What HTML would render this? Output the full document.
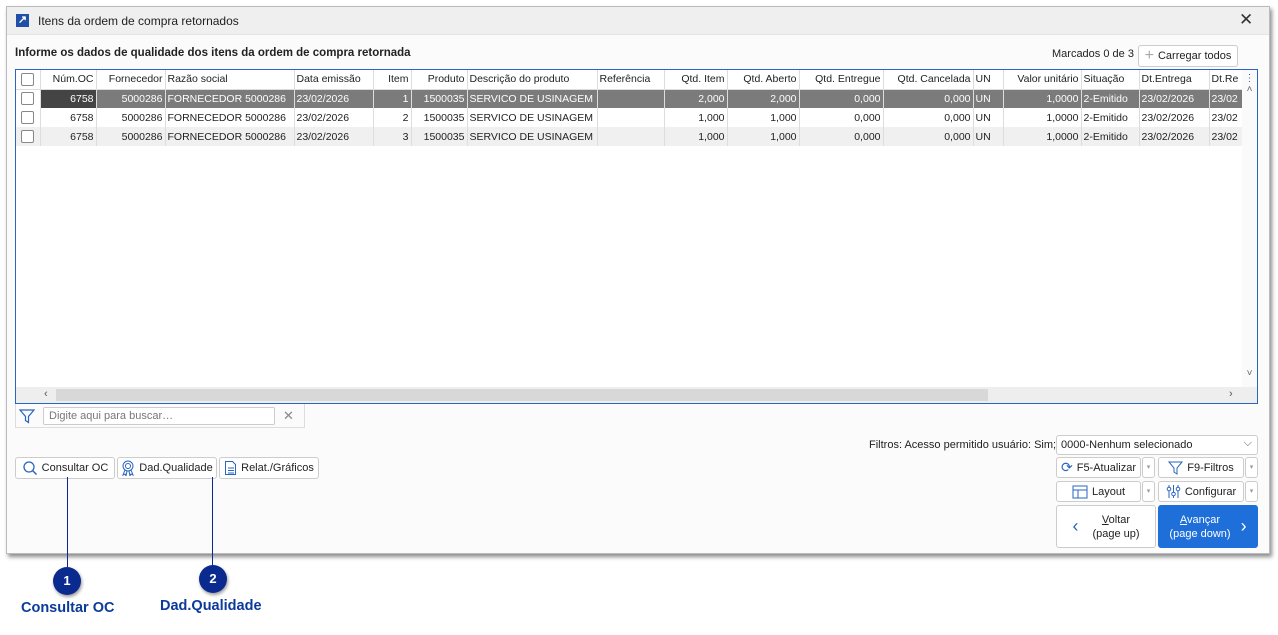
<!DOCTYPE html>
<html><head><meta charset="utf-8"><style>
*{box-sizing:border-box;margin:0;padding:0}
body{width:1278px;height:635px;background:#fff;font-family:"Liberation Sans",sans-serif;font-size:11px;color:#222;position:relative;overflow:hidden}
.a{position:absolute}
.win{left:6px;top:6px;width:1264px;height:548px;background:#fbfbfb;border:1px solid #bbb;box-shadow:2px 3px 4px rgba(0,0,0,.45)}
.title{left:0;top:0;width:100%;height:28px;background:#efefef;border-bottom:1px solid #e4e4e4}
table{border-collapse:collapse;table-layout:fixed;position:absolute;left:0;top:0}
td{height:19px;padding:0 2px;white-space:nowrap;overflow:hidden;border-right:1px solid #ddd;font-size:10.5px}
tr.h td{background:#fff;border-bottom:1px solid #ddd}
tr.s td{background:#7b7b7b;color:#fff}
tr.g td{background:#f0f0f0}
.r{text-align:right}
.cb{width:13px;height:13px;border:1px solid #888;background:#fff;border-radius:2px;margin:0 auto}
.btn{position:absolute;background:#fff;border:1px solid #ccc;border-radius:3px;font-size:11px;display:flex;align-items:center;justify-content:center;gap:4px;color:#222}
.dd{position:absolute;background:#fff;border:1px solid #ccc;border-radius:3px;width:13px;height:21px;font-size:7px;color:#999;text-align:center;line-height:19px}
.badge{position:absolute;width:28px;height:28px;border-radius:50%;background:#0b2a8f;color:#fff;font-weight:bold;font-size:13px;text-align:center;line-height:28px;box-shadow:1px 2px 3px rgba(0,0,0,.4)}
.lbl{position:absolute;color:#0b3a9a;font-weight:bold;font-size:14.5px}
</style></head><body>
<div class="a win">
 <div class="a title">
  <div class="a" style="left:9px;top:7px;width:13px;height:13px;background:#1f4fa8;color:#fff;font-size:11px;line-height:13px;text-align:center;font-weight:bold">↗</div>
  <div class="a" style="left:31px;top:7px;font-size:12px">Itens da ordem de compra retornados</div>
  <div class="a" style="left:1232px;top:3px;font-size:17px;color:#333">✕</div>
 </div>
 <div class="a" style="left:8px;top:40px;font-weight:bold;font-size:11.5px">Informe os dados de qualidade dos itens da ordem de compra retornada</div>
 <div class="a" style="left:1045px;top:41px;font-size:11px">Marcados 0 de 3</div>
 <div class="btn" style="left:1131px;top:38px;width:100px;height:22px"><span style="color:#aaa;font-size:16px">+</span>Carregar todos</div>
 <div class="a" style="left:8px;top:62px;width:1243px;height:335px;border:1px solid #2a65c0;background:#fff;overflow:hidden">
  <table style="width:1226px">
   <colgroup><col style="width:24px"><col style="width:56px"><col style="width:69px"><col style="width:129px"><col style="width:79px"><col style="width:38px"><col style="width:56px"><col style="width:130px"><col style="width:67px"><col style="width:63px"><col style="width:72px"><col style="width:84px"><col style="width:90px"><col style="width:30px"><col style="width:78px"><col style="width:58px"><col style="width:70px"><col style="width:34px"></colgroup>
   <tr class="h"><td><div class="cb"></div></td><td class="r">Núm.OC</td><td class="r">Fornecedor</td><td>Razão social</td><td>Data emissão</td><td class="r">Item</td><td class="r">Produto</td><td>Descrição do produto</td><td>Referência</td><td class="r">Qtd. Item</td><td class="r">Qtd. Aberto</td><td class="r">Qtd. Entregue</td><td class="r">Qtd. Cancelada</td><td>UN</td><td class="r">Valor unitário</td><td>Situação</td><td>Dt.Entrega</td><td>Dt.Re</td></tr>
   <tr class="s"><td style="background:#fff"><div class="cb"></div></td><td class="r" style="background:#444">6758</td><td class="r">5000286</td><td>FORNECEDOR 5000286</td><td>23/02/2026</td><td class="r">1</td><td class="r">1500035</td><td>SERVICO DE USINAGEM</td><td></td><td class="r">2,000</td><td class="r">2,000</td><td class="r">0,000</td><td class="r">0,000</td><td>UN</td><td class="r">1,0000</td><td>2-Emitido</td><td>23/02/2026</td><td>23/02</td></tr>
   <tr><td><div class="cb"></div></td><td class="r">6758</td><td class="r">5000286</td><td>FORNECEDOR 5000286</td><td>23/02/2026</td><td class="r">2</td><td class="r">1500035</td><td>SERVICO DE USINAGEM</td><td></td><td class="r">1,000</td><td class="r">1,000</td><td class="r">0,000</td><td class="r">0,000</td><td>UN</td><td class="r">1,0000</td><td>2-Emitido</td><td>23/02/2026</td><td>23/02</td></tr>
   <tr class="g"><td><div class="cb"></div></td><td class="r">6758</td><td class="r">5000286</td><td>FORNECEDOR 5000286</td><td>23/02/2026</td><td class="r">3</td><td class="r">1500035</td><td>SERVICO DE USINAGEM</td><td></td><td class="r">1,000</td><td class="r">1,000</td><td class="r">0,000</td><td class="r">0,000</td><td>UN</td><td class="r">1,0000</td><td>2-Emitido</td><td>23/02/2026</td><td>23/02</td></tr>
  </table>
  <div class="a" style="left:1226px;top:0;width:15px;height:317px;background:#fafafa;color:#666;font-size:10px;text-align:center"><div style="color:#2a65c0;margin-top:3px">⋮</div><div>˄</div><div style="position:absolute;top:298px;width:15px">˅</div></div>
  <div class="a" style="left:0;top:317px;width:1241px;height:16px;background:#eee"><div class="a" style="left:40px;top:2px;width:932px;height:12px;background:#d8d8d8"></div><div class="a" style="left:28px;top:1px;color:#555">‹</div><div class="a" style="left:1213px;top:1px;color:#555">›</div></div>
 </div>
 <div class="a" style="left:8px;top:397px;width:290px;height:24px;border:1px solid #ddd;border-top:none;background:#fbfbfb">
  <svg class="a" style="left:3px;top:4px" width="16" height="16"><path d="M1 2h14l-5.5 6.5v6l-3-2v-4z" fill="none" stroke="#2a65c0" stroke-width="1.2"/></svg>
  <div class="a" style="left:27px;top:3px;width:232px;height:18px;border:1px solid #ccc;border-radius:2px;background:#fff;color:#777;padding:2px 5px">Digite aqui para buscar…</div>
  <div class="a" style="left:267px;top:4px;color:#888;font-size:13px">✕</div>
 </div>
 <div class="btn" style="left:8px;top:450px;width:100px;height:22px"><svg width="16" height="16"><circle cx="7" cy="7" r="5" fill="none" stroke="#2a65c0" stroke-width="1.3"/><path d="M10.5 10.5l4 4" stroke="#2a65c0" stroke-width="1.5"/></svg>Consultar OC</div>
 <div class="btn" style="left:110px;top:450px;width:100px;height:22px"><svg width="14" height="16"><circle cx="7" cy="6" r="5" fill="none" stroke="#2a65c0"/><circle cx="7" cy="6" r="2.5" fill="none" stroke="#2a65c0"/><path d="M4 10l-2 5 2-1 1 2 1-5M10 10l2 5-2-1-1 2-1-5" fill="none" stroke="#2a65c0"/></svg>Dad.Qualidade</div>
 <div class="btn" style="left:212px;top:450px;width:100px;height:22px"><svg width="13" height="16"><path d="M1.5 1.5h7l3 3v10h-10z M4 8h6M4 10.5h6M4 13h6" fill="none" stroke="#2a65c0"/></svg>Relat./Gráficos</div>
 <div class="a" style="left:862px;top:432px">Filtros: Acesso permitido usuário: Sim;</div>
 <div class="a" style="left:1049px;top:428px;width:202px;height:20px;border:1px solid #ccc;border-radius:3px;background:#fff;padding:3px 4px">0000-Nenhum selecionado<span style="position:absolute;right:5px;top:1px;color:#555">⌵</span></div>
 <div class="btn" style="left:1049px;top:450px;width:85px;height:21px"><span style="color:#2a65c0;font-size:14px">⟳</span>F5-Atualizar</div>
 <div class="dd" style="left:1135px;top:450px">▾</div>
 <div class="btn" style="left:1151px;top:450px;width:86px;height:21px"><svg width="15" height="15"><path d="M1 2h13l-5 6v6l-3-2v-4z" fill="none" stroke="#2a65c0"/></svg>F9-Filtros</div>
 <div class="dd" style="left:1238px;top:450px">▾</div>
 <div class="btn" style="left:1049px;top:474px;width:85px;height:21px"><svg width="16" height="14"><rect x="1" y="1" width="14" height="12" fill="none" stroke="#2a65c0"/><path d="M1 5h14M6 5v8" stroke="#2a65c0"/></svg>Layout</div>
 <div class="dd" style="left:1135px;top:474px">▾</div>
 <div class="btn" style="left:1151px;top:474px;width:86px;height:21px"><svg width="15" height="15"><path d="M3 1v13M7.5 1v13M12 1v13" stroke="#2a65c0"/><circle cx="3" cy="5" r="1.8" fill="#fff" stroke="#2a65c0"/><circle cx="7.5" cy="10" r="1.8" fill="#fff" stroke="#2a65c0"/><circle cx="12" cy="5" r="1.8" fill="#fff" stroke="#2a65c0"/></svg>Configurar</div>
 <div class="dd" style="left:1238px;top:474px">▾</div>
 <div class="btn" style="left:1049px;top:498px;width:100px;height:43px;gap:14px"><span style="color:#2a65c0;font-size:18px">‹</span><span style="text-align:center;line-height:14px"><u>V</u>oltar<br>(page up)</span></div>
 <div class="btn" style="left:1151px;top:498px;width:100px;height:43px;background:#1e6fd9;border-color:#1e6fd9;color:#fff;gap:10px"><span style="text-align:center;line-height:14px"><u>A</u>vançar<br>(page down)</span><span style="font-size:18px">›</span></div>
</div>
<div class="a" style="left:67px;top:477px;width:1px;height:90px;background:#0b2a8f"></div>
<div class="a" style="left:212px;top:477px;width:1px;height:90px;background:#0b2a8f"></div>
<div class="badge" style="left:53px;top:567px">1</div>
<div class="badge" style="left:199px;top:565px">2</div>
<div class="lbl" style="left:21px;top:600px">Consultar OC</div>
<div class="lbl" style="left:160px;top:598px">Dad.Qualidade</div>
</body></html>
